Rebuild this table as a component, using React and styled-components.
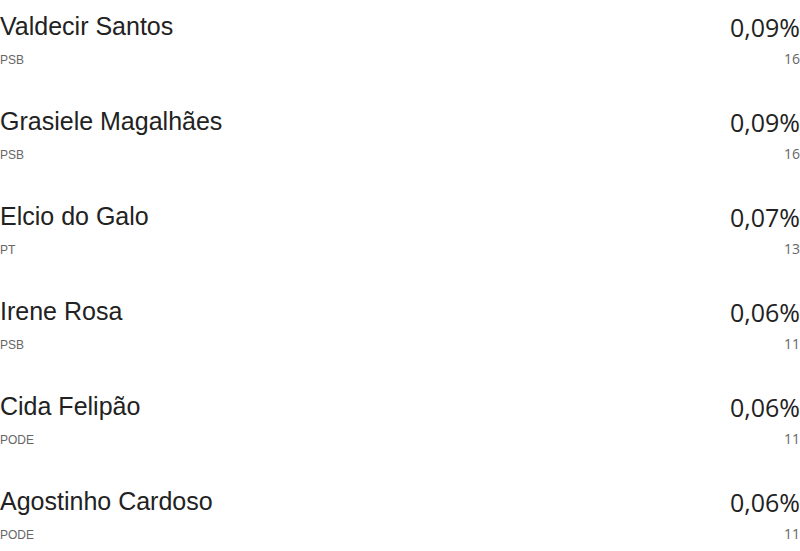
import React from "react";
import styled, { createGlobalStyle } from "styled-components";

const Global = createGlobalStyle`
  html, body { margin: 0; padding: 0; background: #fff; }
  body { font-family: "Liberation Sans", Arial, sans-serif; }
`;

const List = styled.ul`
  list-style: none;
  margin: 0;
  padding: 0;
  width: 800px;
`;

const Row = styled.li`
  display: flex;
  justify-content: space-between;
  height: 95px;
  padding-top: 12px;
  box-sizing: border-box;
`;

const Col = styled.div`
  display: flex;
  flex-direction: column;
  align-items: ${(p) => (p.$right ? "flex-end" : "flex-start")};
`;

const Name = styled.div`
  font-family: "Liberation Sans", Arial, sans-serif;
  font-size: 25px;
  line-height: 28px;
  color: #222;
`;

const Party = styled.div`
  font-family: "Liberation Sans", Arial, sans-serif;
  font-size: 12px;
  line-height: 16px;
  margin-top: 12px;
  color: #666;
`;

const Pct = styled.div`
  font-family: "Open Sans", sans-serif;
  font-size: 25px;
  line-height: 30px;
  color: #222;
`;

const Num = styled.div`
  font-family: "Open Sans", sans-serif;
  font-size: 14px;
  line-height: 16px;
  margin-top: 9px;
  color: #666;
`;

const data = [
  ["Valdecir Santos", "PSB", "0,09%", "16"],
  ["Grasiele Magalhães", "PSB", "0,09%", "16"],
  ["Elcio do Galo", "PT", "0,07%", "13"],
  ["Irene Rosa", "PSB", "0,06%", "11"],
  ["Cida Felipão", "PODE", "0,06%", "11"],
  ["Agostinho Cardoso", "PODE", "0,06%", "11"],
];

export default function App() {
  return (
    <>
      <Global />
      <List>
        {data.map(([n, p, pct, num]) => (
          <Row key={n}>
            <Col>
              <Name>{n}</Name>
              <Party>{p}</Party>
            </Col>
            <Col $right>
              <Pct>{pct}</Pct>
              <Num>{num}</Num>
            </Col>
          </Row>
        ))}
      </List>
    </>
  );
}
